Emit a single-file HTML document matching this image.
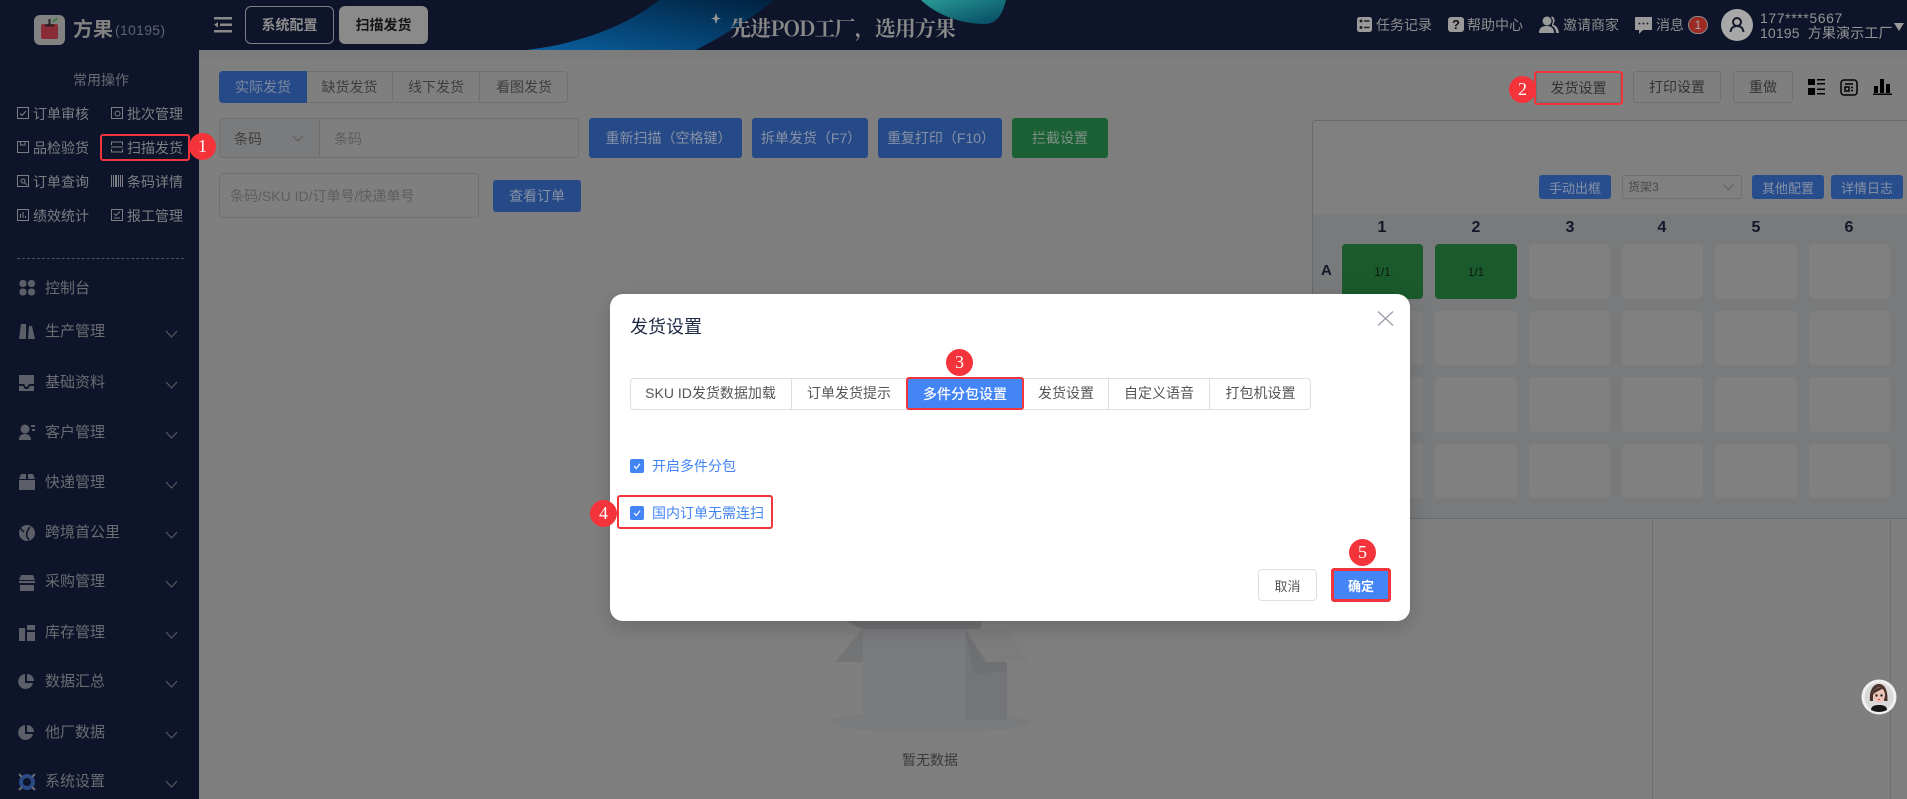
<!DOCTYPE html>
<html lang="zh-CN"><head><meta charset="utf-8"><title>发货设置</title>
<style>
*{box-sizing:border-box;margin:0;padding:0}
html,body{width:1907px;height:799px;overflow:hidden;background:#7f7f7f}
body{position:relative;font-family:"Liberation Sans","Noto Sans CJK SC",sans-serif;font-size:14px}
.a{position:absolute}
.t{position:absolute;white-space:nowrap;line-height:20px;height:20px}
.b{position:absolute;display:flex;align-items:center;justify-content:center;white-space:nowrap;border-radius:3px}
.blue{background:#264a87;color:#8791a6}
.ghost{border:1px solid #6e7072;color:#333}
.s{color:#7d7f84}
.m{color:#6b6d73;font-size:15px}
.c{position:absolute;background:#808080;border-radius:4px}
.n{position:absolute;top:218px;width:30px;text-align:center;font-weight:700;font-size:16px;line-height:20px;color:#14172a}
.badge{position:absolute;width:27px;height:27px;border-radius:50%;background:#f5333a;color:#fff;font-family:"Liberation Serif",serif;font-size:18px;line-height:27px;text-align:center;z-index:5}
.red{position:absolute;border:2px solid #f0353d;border-radius:3px;z-index:4}
.tab{position:absolute;top:378px;height:32px;line-height:30px;text-align:center;color:#555;border-right:1px solid #dcdfe6;white-space:nowrap}
svg{position:absolute;display:block}
</style></head><body>

<!-- header -->
<div class="a" style="left:0;top:0;width:1907px;height:50px;background:#0e1429"></div>
<svg style="left:500px;top:0" width="540" height="50" viewBox="500 0 540 50">
<defs><linearGradient id="g1" x1="0" y1="1" x2="1" y2="0"><stop offset="0" stop-color="#0a609f"/><stop offset="1" stop-color="#00213f"/></linearGradient>
<linearGradient id="g2" x1="0" y1="0" x2="1" y2="1"><stop offset="0" stop-color="#2a9a96"/><stop offset="1" stop-color="#03475f"/></linearGradient></defs>
<path d="M526 50C580 44 630 24 659 0L774 0C750 20 722 36 696 50Z" fill="url(#g1)"/>
<path d="M921 0C935 14 960 24 985 24C998 24 1003 12 1006 0Z" fill="url(#g2)"/>
<path d="M716 13L717.500 17.500L721 18.500L717.500 19.500L716 24L714.500 19.500L711 18.500L714.500 17.500Z" fill="#999"/>
</svg>
<div class="t" style="left:730px;top:15px;height:26px;line-height:26px;font-family:'Noto Serif CJK SC',serif;font-weight:700;font-size:21px;color:#8a8a8a;letter-spacing:-.9px">先进POD工厂，选用方果</div>

<svg style="left:34px;top:15px" width="31" height="30" viewBox="0 0 31 30"><rect width="31" height="30" rx="6" fill="#828282"/><rect x="7" y="9" width="17" height="15" rx="2" fill="#8a2c36"/><path d="M15.500 4V10M11 10.500H20" stroke="#222" stroke-width="2"/><path d="M18 7Q20 3 24 3Q23 7 18 7Z" fill="#3f7a3a"/></svg>
<div class="t" style="left:73px;top:17px;height:26px;line-height:26px;font-size:20px;font-weight:700;color:#808080">方果</div>
<div class="t" style="left:115px;top:20px;font-size:14px;color:#5e6474;letter-spacing:.3px">(10195)</div>
<svg style="left:214px;top:17px" width="18" height="16" viewBox="0 0 18 16" fill="#8a8a8a"><rect width="18" height="2.500"/><rect x="6" y="6.500" width="12" height="2.500"/><rect y="13" width="18" height="2.500"/><path d="M0 7.700L4 5V10.500Z"/></svg>
<div class="b" style="left:245px;top:6px;width:89px;height:38px;border:1px solid #7d7f85;border-radius:6px;color:#8d8d8d;font-weight:700">系统配置</div>
<div class="b" style="left:339px;top:6px;width:89px;height:38px;background:#8a8a8a;border-radius:6px;color:#151515;font-weight:700">扫描发货</div>

<!-- header right -->
<svg style="left:1357px;top:17px" width="15" height="15" viewBox="0 0 15 15"><rect width="15" height="15" rx="2.500" fill="#9a9a9a"/><path d="M7 4H12.500M7 10.500H12.500" stroke="#222" stroke-width="1.500"/><circle cx="4" cy="4" r="1.500" fill="#222"/><circle cx="4" cy="10.500" r="1.500" fill="#222"/></svg>
<div class="t" style="left:1376px;top:15px;color:#8f8f8f">任务记录</div>
<div class="b" style="left:1448px;top:17px;width:16px;height:15px;background:#9a9a9a;color:#111;font-weight:700;font-size:13px">?</div>
<div class="t" style="left:1467px;top:15px;color:#8f8f8f">帮助中心</div>
<svg style="left:1539px;top:16px" width="20" height="17" viewBox="0 0 20 17" fill="#9a9a9a"><circle cx="8" cy="5" r="4.500"/><path d="M0 17C0 11 4 10 8 10S15 12 15 17Z"/><path d="M13 .5C16 1 16.500 6 14 8.500C18 10 19.500 13 20 17H17C17 13 15 11 13 10V8C14.500 6 14 3 12 1Z"/></svg>
<div class="t" style="left:1563px;top:15px;color:#8f8f8f">邀请商家</div>
<svg style="left:1635px;top:17px" width="17" height="17" viewBox="0 0 17 17"><path d="M0 0H17V13H8L4 17V13H0Z" fill="#9a9a9a"/><circle cx="4.500" cy="6.500" r="1" fill="#222"/><circle cx="8.500" cy="6.500" r="1" fill="#222"/><circle cx="12.500" cy="6.500" r="1" fill="#222"/></svg>
<div class="t" style="left:1656px;top:15px;color:#8f8f8f">消息</div>
<div class="b" style="left:1688px;top:16px;width:20px;height:18px;border-radius:9px;background:#9e2a24;border:1px solid #8a8a8a;color:#aaa;font-size:12px">1</div>
<svg style="left:1721px;top:9px" width="32" height="32" viewBox="0 0 32 32"><circle cx="16" cy="16" r="16" fill="#a8a8a8"/><circle cx="16" cy="13" r="4" fill="none" stroke="#15192a" stroke-width="2"/><path d="M9.500 23C10 18.500 13 17 16 17S22 18.500 22.500 23" fill="none" stroke="#15192a" stroke-width="2"/></svg>
<div class="t" style="left:1760px;top:8px;color:#959595;letter-spacing:.6px">177****5667</div>
<div class="t" style="left:1760px;top:23px;color:#959595;letter-spacing:.15px">10195&nbsp; 方果演示工厂</div>
<svg style="left:1894px;top:23px" width="10" height="8" viewBox="0 0 10 8"><path d="M0 0H10L5 8Z" fill="#9a9a9a"/></svg>

<!-- sidebar -->
<div class="a" style="left:0;top:50px;width:199px;height:749px;background:#0e1429"></div>
<div class="t s" style="left:73px;top:70px;color:#686b74">常用操作</div>
<div class="t s" style="left:33px;top:104px">订单审核</div><div class="t s" style="left:127px;top:104px">批次管理</div>
<div class="t s" style="left:33px;top:138px">品检验货</div><div class="t s" style="left:127px;top:138px">扫描发货</div>
<div class="t s" style="left:33px;top:172px">订单查询</div><div class="t s" style="left:127px;top:172px">条码详情</div>
<div class="t s" style="left:33px;top:206px">绩效统计</div><div class="t s" style="left:127px;top:206px">报工管理</div>
<svg style="left:17px;top:107px" width="12" height="12" viewBox="0 0 12 12" fill="none" stroke="#7d7f84"><rect x=".5" y=".5" width="11" height="11"/><path d="M3 6.500L5 8.500L9 4"/></svg>
<svg style="left:111px;top:107px" width="12" height="12" viewBox="0 0 12 12" fill="none" stroke="#7d7f84"><rect x=".5" y=".5" width="11" height="11"/><circle cx="6.500" cy="6.500" r="2.500"/></svg>
<svg style="left:17px;top:141px" width="12" height="12" viewBox="0 0 12 12" fill="none" stroke="#7d7f84"><rect x=".5" y=".5" width="11" height="11"/><path d="M3.500 .5V4H8V.5"/></svg>
<svg style="left:111px;top:141px" width="12" height="12" viewBox="0 0 12 12" fill="none" stroke="#7d7f84"><path d="M.5 4V1H11.500V4M.5 8V11H11.500V8M0 6H12"/></svg>
<svg style="left:17px;top:175px" width="12" height="12" viewBox="0 0 12 12" fill="none" stroke="#7d7f84"><rect x=".5" y=".5" width="11" height="11"/><circle cx="6" cy="6" r="2"/><path d="M7.500 7.500L10 10"/></svg>
<svg style="left:111px;top:175px" width="12" height="12" viewBox="0 0 12 12" fill="#7d7f84"><path d="M0 0H1V12H0ZM2 0H3V12H2ZM4 0H6V12H4ZM7 0H8V12H7ZM9 0H10V12H9ZM11 0H12V12H11Z"/></svg>
<svg style="left:17px;top:209px" width="12" height="12" viewBox="0 0 12 12" fill="none" stroke="#7d7f84"><rect x=".5" y=".5" width="11" height="11"/><path d="M3.500 9V5M6 9V3M8.500 9V7"/></svg>
<svg style="left:111px;top:209px" width="12" height="12" viewBox="0 0 12 12" fill="none" stroke="#7d7f84"><rect x=".5" y=".5" width="11" height="11"/><path d="M3 4.500L5 6.500L9 2.500M3 9H9"/></svg>
<div class="a" style="left:17px;top:258px;width:167px;border-top:1px dashed #4f5260"></div>

<div class="t m" style="left:45px;top:279px">控制台</div>
<div class="t m" style="left:45px;top:322px">生产管理</div>
<div class="t m" style="left:45px;top:373px">基础资料</div>
<div class="t m" style="left:45px;top:423px">客户管理</div>
<div class="t m" style="left:45px;top:473px">快递管理</div>
<div class="t m" style="left:45px;top:523px">跨境首公里</div>
<div class="t m" style="left:45px;top:572px">采购管理</div>
<div class="t m" style="left:45px;top:623px">库存管理</div>
<div class="t m" style="left:45px;top:672px">数据汇总</div>
<div class="t m" style="left:45px;top:723px">他厂数据</div>
<div class="t m" style="left:45px;top:772px">系统设置</div>
<svg style="left:0;top:0" width="199" height="799" fill="none" stroke="#5c5f68" stroke-width="1">
<path d="M166 331L171.500 337L177 331M166 382L171.500 388L177 382M166 432L171.500 438L177 432M166 482L171.500 488L177 482M166 532L171.500 538L177 532M166 581L171.500 587L177 581M166 632L171.500 638L177 632M166 681L171.500 687L177 681M166 732L171.500 738L177 732M166 781L171.500 787L177 781"/>
<g fill="#5c5f68" stroke="none">
<g transform="translate(0,1)"><rect x="19.500" y="279" width="7" height="7" rx="3"/><rect x="28" y="279" width="7" height="7" rx="3"/><rect x="19.500" y="287.500" width="7" height="7" rx="3"/><rect x="28" y="287.500" width="7" height="7" rx="3"/></g>
<g transform="translate(0,2)"><path d="M21 322H26V337H19ZM29 324H32L35 337H28Z"/></g>
<g transform="translate(0,4)"><path d="M19 371H34V380H29L27 383H26L24 380H19ZM19 382H23L25 385H28L30 382H34V387H19Z"/></g>
<g transform="translate(0,5)"><circle cx="25" cy="424" r="4.500"/><path d="M19 435C19 430 22 429 25 429S31 431 31 435Z"/><rect x="31" y="420" width="4" height="2"/><rect x="32" y="424" width="3" height="2"/></g>
<g transform="translate(0,7)"><path d="M19 472H26V467H21ZM28 472H35L33 467H28Z"/><path d="M19 473H35V483H19Z"/></g>
<g transform="translate(0,9)"><circle cx="27" cy="524" r="8"/></g>
<g transform="translate(0,10)"><path d="M21 565H33L35 570H19ZM19 571H35V573H19ZM20 575H34V581H20Z"/></g>
<g transform="translate(0,12)"><path d="M19 616H25V629H19ZM27 613H35V618H27ZM27 620H35V629H27Z"/></g>
<g transform="translate(0,12)"><path d="M25 662A7.500 7.500 0 1 0 33 671H25ZM27 662V669H34A7 7 0 0 0 27 662Z"/></g>
<g transform="translate(0,15)"><path d="M25 710A7.500 7.500 0 1 0 33 719H25ZM27 710V717H34A7 7 0 0 0 27 710Z"/></g>
</g>
<g transform="translate(0,9)"><path d="M20 519L24 523" stroke="#0e1429" stroke-width="1.500"/><path d="M30 518Q24 525 29 531" stroke="#0e1429" stroke-width="1.500"/></g>
<g transform="translate(0,16)"><circle cx="27" cy="766" r="6" stroke="#2a4a85" stroke-width="4"/><path d="M22 761L19 758M32 761L35 758M22 771L19 774M32 771L35 774" stroke="#6b6d73" stroke-width="2"/></g>
</svg>

<!-- main -->
<div class="a" style="left:199px;top:50px;width:1708px;height:10px;background:#7c7c7c"></div>
<div class="a" style="left:219px;top:71px;width:349px;height:32px;border:1px solid #707070;border-radius:4px"></div>
<div class="b" style="left:219px;top:71px;width:88px;height:32px;background:#264a87;color:#7d879d;border-radius:4px 0 0 4px">实际发货</div>
<div class="b" style="left:307px;top:71px;width:86px;height:32px;color:#3e3e3e;border-right:1px solid #707070">缺货发货</div>
<div class="b" style="left:393px;top:71px;width:87px;height:32px;color:#3e3e3e;border-right:1px solid #707070">线下发货</div>
<div class="b" style="left:480px;top:71px;width:88px;height:32px;color:#3e3e3e">看图发货</div>

<div class="a" style="left:219px;top:118px;width:360px;height:40px;border:1px solid #707070;border-radius:4px"></div>
<div class="a" style="left:219px;top:118px;width:101px;height:40px;background:#7a7b7d;border:1px solid #707070;border-radius:4px 0 0 4px"></div>
<div class="t" style="left:234px;top:129px;color:#3e3e3e">条码</div>
<svg style="left:292px;top:135px" width="12" height="7" viewBox="0 0 12 7" fill="none" stroke="#5e5e5e"><path d="M1 1L6 6L11 1"/></svg>
<div class="t" style="left:334px;top:129px;color:#5e5e5e">条码</div>
<div class="b blue" style="left:589px;top:118px;width:153px;height:40px;padding-left:6px">重新扫描（空格键）</div>
<div class="b blue" style="left:752px;top:118px;width:116px;height:40px;padding-left:2px">拆单发货（F7）</div>
<div class="b blue" style="left:878px;top:118px;width:124px;height:40px;padding-left:2px">重复打印（F10）</div>
<div class="b" style="left:1012px;top:118px;width:96px;height:40px;background:#1c6136;color:#7d9184">拦截设置</div>
<div class="a" style="left:219px;top:173px;width:260px;height:45px;border:1px solid #707070;border-radius:4px"></div>
<div class="t" style="left:230px;top:186px;color:#5e5e5e">条码/SKU ID/订单号/快递单号</div>
<div class="b blue" style="left:493px;top:180px;width:88px;height:32px">查看订单</div>

<div class="b ghost" style="left:1536px;top:72px;width:85px;height:31px">发货设置</div>
<div class="b ghost" style="left:1633px;top:71px;width:88px;height:32px">打印设置</div>
<div class="b ghost" style="left:1733px;top:71px;width:60px;height:32px">重做</div>
<svg style="left:1808px;top:79px" width="17" height="16" viewBox="0 0 17 16" fill="#000"><rect width="7" height="6"/><rect y="9" width="7" height="7"/><rect x="9" y="0" width="8" height="1.500"/><rect x="9" y="4" width="8" height="1.500"/><rect x="9" y="9.500" width="8" height="1.500"/><rect x="9" y="14" width="8" height="1.500"/></svg>
<svg style="left:1840px;top:79px" width="18" height="17" viewBox="0 0 18 17" fill="none" stroke="#000" stroke-width="1.500"><rect x="1" y="1" width="16" height="15" rx="3"/><path d="M5 5H13"/><rect x="5" y="8" width="4" height="4"/><path d="M11 8.500H13M11 11.500H13"/></svg>
<svg style="left:1873px;top:79px" width="19" height="16" viewBox="0 0 19 16" fill="#000"><rect x="1" y="7" width="4" height="7"/><rect x="7" y="0" width="4" height="14"/><rect x="13" y="5" width="4" height="9"/><rect y="14.500" width="19" height="1.500"/></svg>

<!-- shelf panel -->
<div class="a" style="left:1312px;top:120px;width:595px;height:399px;background:#808080;border:1px solid #676a6e;border-right:0;border-radius:3px 0 0 0"></div>
<div class="a" style="left:1313px;top:214px;width:594px;height:304px;background:#787a7c"></div>
<div class="b blue" style="left:1539px;top:175px;width:72px;height:24px;font-size:13px;background:#284d8d;color:#8791a6">手动出框</div>
<div class="a" style="left:1622px;top:175px;width:120px;height:24px;border:1px solid #6e7072;border-radius:3px"></div>
<div class="t" style="left:1628px;top:177px;font-size:12px;color:#4b4b4b">货架3</div>
<svg style="left:1723px;top:184px" width="11" height="7" viewBox="0 0 11 7" fill="none" stroke="#5e5e5e"><path d="M.5 .5L5.500 5.500L10.500 .5"/></svg>
<div class="b blue" style="left:1752px;top:175px;width:72px;height:24px;font-size:13px;background:#284d8d;color:#8791a6">其他配置</div>
<div class="b blue" style="left:1831px;top:175px;width:72px;height:24px;font-size:13px;background:#284d8d;color:#8791a6">详情日志</div>
<div class="n" style="left:1367px">1</div><div class="n" style="left:1461px">2</div><div class="n" style="left:1555px">3</div><div class="n" style="left:1647px">4</div><div class="n" style="left:1741px">5</div><div class="n" style="left:1834px">6</div>
<div class="t" style="left:1321px;top:261px;font-weight:700;font-size:15px;color:#14172a">A</div>

<div class="b" style="left:1342px;top:244px;width:81px;height:55px;background:#1a5a2b;color:#0c1a10;font-size:12px;border-radius:4px">1/1</div>
<div class="b" style="left:1435px;top:244px;width:82px;height:55px;background:#1a5a2b;color:#0c1a10;font-size:12px;border-radius:4px">1/1</div>
<div class="c" style="left:1529px;top:244px;width:81px;height:55px"></div><div class="c" style="left:1622px;top:244px;width:81px;height:55px"></div><div class="c" style="left:1715px;top:244px;width:82px;height:55px"></div><div class="c" style="left:1809px;top:244px;width:81px;height:55px"></div>
<div class="c" style="left:1342px;top:311px;width:81px;height:54px"></div><div class="c" style="left:1435px;top:311px;width:82px;height:54px"></div><div class="c" style="left:1529px;top:311px;width:81px;height:54px"></div><div class="c" style="left:1622px;top:311px;width:81px;height:54px"></div><div class="c" style="left:1715px;top:311px;width:82px;height:54px"></div><div class="c" style="left:1809px;top:311px;width:81px;height:54px"></div>
<div class="c" style="left:1342px;top:377px;width:81px;height:55px"></div><div class="c" style="left:1435px;top:377px;width:82px;height:55px"></div><div class="c" style="left:1529px;top:377px;width:81px;height:55px"></div><div class="c" style="left:1622px;top:377px;width:81px;height:55px"></div><div class="c" style="left:1715px;top:377px;width:82px;height:55px"></div><div class="c" style="left:1809px;top:377px;width:81px;height:55px"></div>
<div class="c" style="left:1342px;top:444px;width:81px;height:54px"></div><div class="c" style="left:1435px;top:444px;width:82px;height:54px"></div><div class="c" style="left:1529px;top:444px;width:81px;height:54px"></div><div class="c" style="left:1622px;top:444px;width:81px;height:54px"></div><div class="c" style="left:1715px;top:444px;width:82px;height:54px"></div><div class="c" style="left:1809px;top:444px;width:81px;height:54px"></div>
<div class="a" style="left:1652px;top:519px;width:1px;height:280px;background:#6f6f6f"></div>
<div class="a" style="left:1890px;top:519px;width:1px;height:280px;background:#6f6f6f"></div>

<!-- empty illustration -->
<svg style="left:820px;top:615px" width="220" height="125" viewBox="820 615 220 125">
<ellipse cx="930" cy="722" rx="100" ry="11" fill="#7a7b7d"/>
<path d="M845 621H982L980 629H863Z" fill="#707072"/>
<path d="M863 629V662H835Z" fill="#737476"/>
<path d="M863 629H965V720H863Z" fill="#7a7b7d"/>
<path d="M965 629H1007V720H965Z" fill="#747578"/>
<path d="M965 629L986 662H1007V671L974 674Z" fill="#6f7073"/>
<path d="M965 629H1007L1029 662H986Z" fill="#7c7c7d"/>
</svg>
<div class="t" style="left:902px;top:750px;color:#3a3a3a">暂无数据</div>

<!-- avatar -->
<svg style="left:1861px;top:679px" width="36" height="36" viewBox="0 0 36 36">
<circle cx="18" cy="18" r="17.500" fill="#f0f0f0"/><circle cx="18" cy="18" r="14.500" fill="#d9d9d9"/>
<path d="M9 22C8 10 13 5 18 5S27 10 26.500 22H23V13H12V22Z" fill="#4b322c"/>
<ellipse cx="18" cy="16" rx="6" ry="7.500" fill="#eec4b8"/>
<path d="M12 16C12 10 16 8 22 9C19 12 15 12 12 16Z" fill="#4b322c"/>
<circle cx="15.500" cy="16.500" r="1.200" fill="#222"/><circle cx="20.500" cy="16.500" r="1.200" fill="#222"/><path d="M17 20.500H19" stroke="#c44" stroke-width="1"/>
<path d="M10 31C10 27 14 26 18 26S26 27 26 31Q18 35 10 31Z" fill="#151515"/>
</svg>

<!-- dialog -->
<div class="a" style="left:610px;top:294px;width:800px;height:327px;background:#fff;border-radius:13px;box-shadow:0 6px 22px rgba(0,0,0,.18)"></div>
<div class="t" style="left:630px;top:315px;height:24px;line-height:24px;font-size:18px;color:#1f2a44">发货设置</div>
<svg style="left:1377px;top:311px" width="17" height="15" viewBox="0 0 17 15" fill="none" stroke="#9a9ea8" stroke-width="1.300"><path d="M1 .5L16 14.500M16 .5L1 14.500"/></svg>

<div class="a" style="left:630px;top:378px;width:681px;height:32px;border:1px solid #dcdfe6;border-radius:4px"></div>
<div class="tab" style="left:630px;width:162px">SKU ID发货数据加载</div>
<div class="tab" style="left:792px;width:115px">订单发货提示</div>
<div class="b" style="left:907px;top:379px;width:116px;height:30px;background:#4385f5;color:#fff;font-weight:500;border-radius:0">多件分包设置</div>
<div class="tab" style="left:1024px;width:85px">发货设置</div>
<div class="tab" style="left:1109px;width:101px">自定义语音</div>
<div class="tab" style="left:1210px;width:101px;border-right:0">打包机设置</div>

<svg style="left:630px;top:459px" width="14" height="14" viewBox="0 0 14 14"><rect width="14" height="14" rx="2" fill="#4385f5"/><path d="M4 7L6.300 9.500L10 4.800" fill="none" stroke="#fff" stroke-width="1.200"/></svg>
<div class="t" style="left:652px;top:456px;color:#4385f5">开启多件分包</div>
<svg style="left:630px;top:506px" width="14" height="14" viewBox="0 0 14 14"><rect width="14" height="14" rx="2" fill="#4385f5"/><path d="M4 7L6.300 9.500L10 4.800" fill="none" stroke="#fff" stroke-width="1.200"/></svg>
<div class="t" style="left:652px;top:503px;color:#4385f5">国内订单无需连扫</div>

<div class="b" style="left:1258px;top:569px;width:59px;height:32px;border:1px solid #dcdfe6;color:#555;font-size:13px;border-radius:4px">取消</div>
<div class="b" style="left:1331px;top:568px;width:60px;height:34px;background:#4385f5;border:3px solid #f0353d;color:#fff;font-weight:700;font-size:13px">确定</div>

<!-- annotations -->
<div class="red" style="left:100px;top:134px;width:90px;height:27px"></div>
<div class="red" style="left:1534px;top:71px;width:89px;height:34px"></div>
<div class="red" style="left:906px;top:377px;width:118px;height:33px"></div>
<div class="red" style="left:617px;top:495px;width:156px;height:34px"></div>
<div class="badge" style="left:189px;top:133px">1</div>
<div class="badge" style="left:1509px;top:76px">2</div>
<div class="badge" style="left:946px;top:349px">3</div>
<div class="badge" style="left:590px;top:500px">4</div>
<div class="badge" style="left:1349px;top:539px">5</div>
</body></html>
